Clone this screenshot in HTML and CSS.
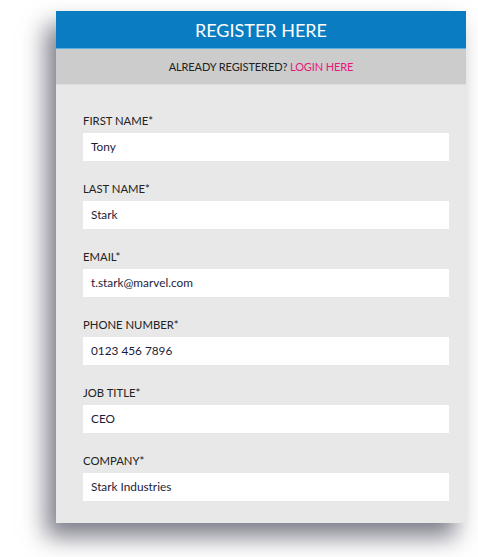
FILE: index.html
```html
<!DOCTYPE html>
<html>
<head>
<meta charset="utf-8">
<link rel="stylesheet" href="styles.css">
</head>
<body>
<div class="card">
  <div class="header">REGISTER HERE</div>
  <div class="sub">ALREADY REGISTERED? <span class="login">LOGIN HERE</span></div>
  <div class="body">
    <div class="field"><div class="label">FIRST NAME*</div><div class="input">Tony</div></div>
    <div class="field"><div class="label">LAST NAME*</div><div class="input">Stark</div></div>
    <div class="field"><div class="label">EMAIL*</div><div class="input">t.stark@marvel.com</div></div>
    <div class="field"><div class="label">PHONE NUMBER*</div><div class="input">0123 456 7896</div></div>
    <div class="field"><div class="label">JOB TITLE*</div><div class="input">CEO</div></div>
    <div class="field"><div class="label">COMPANY*</div><div class="input">Stark Industries</div></div>
  </div>
</div>
</body>
</html>
```
FILE: styles.css
```css
html, body { margin: 0; padding: 0; background: #ffffff; }
body {
  width: 478px; height: 557px; overflow: hidden;
  font-family: Lato, "Open Sans", sans-serif;
}
.card {
  margin: 11px 0 0 56px;
  width: 410px;
  background: #e8e8e8;
  box-shadow: -10px 14px 22px rgba(40, 40, 60, 0.6);
}
.header {
  height: 37px;
  background: #0a7dc2;
  border-bottom: 1px solid #5aaee0;
  color: #fff;
  font-size: 18px;
  text-align: center;
  line-height: 38px;
}
.sub {
  height: 35px;
  background: #cccccc;
  border-bottom: 1px solid #dedede;
  font-size: 11px;
  color: #222;
  text-align: center;
  line-height: 36px;
  letter-spacing: -0.1px;
}
.login { color: #e6197a; }
.body {
  padding: 28px 17px 22px 27px;
  display: flex; flex-direction: column; gap: 20px;
}
.field { display: flex; flex-direction: column; gap: 5px; }
.label { font-size: 11.3px; color: #222; line-height: 15px; height: 15px; }
.input {
  height: 28px; background: #fff;
  font-size: 11.8px; color: #1c1c3a; line-height: 28px;
  padding-left: 8px;
}
```
